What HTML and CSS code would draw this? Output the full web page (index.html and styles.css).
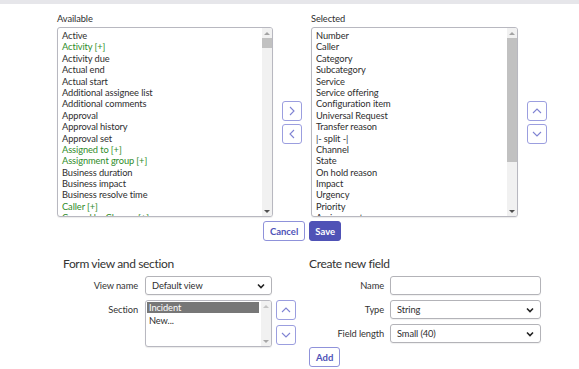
FILE: index.html
```html
<!DOCTYPE html>
<html lang="en">
<head>
    <meta charset="UTF-8">
    <meta name="viewport" content="width=device-width, initial-scale=1.0">
    <title>Configure form layout</title>
    <link rel="stylesheet" href="styles.css">
</head>
<body>

    <div class="topbar"></div>

    <!-- slushbucket -->
    <div class="bucket">
        <div class="bucket-col avail-col">
            <div class="col-label">Available</div>
            <div class="listbox big">
                <div class="items">
                    <div class="item">Active</div>
                    <div class="item ref">Activity [+]</div>
                    <div class="item">Activity due</div>
                    <div class="item">Actual end</div>
                    <div class="item">Actual start</div>
                    <div class="item">Additional assignee list</div>
                    <div class="item">Additional comments</div>
                    <div class="item">Approval</div>
                    <div class="item">Approval history</div>
                    <div class="item">Approval set</div>
                    <div class="item ref">Assigned to [+]</div>
                    <div class="item ref">Assignment group [+]</div>
                    <div class="item">Business duration</div>
                    <div class="item">Business impact</div>
                    <div class="item">Business resolve time</div>
                    <div class="item ref">Caller [+]</div>
                    <div class="item ref">Caused by Change [+]</div>
                </div>
                <div class="scrollbar">
                    <span class="arrow up"></span>
                    <div class="track"><div class="thumb thumb-small"></div></div>
                    <span class="arrow down"></span>
                </div>
            </div>
        </div>

        <div class="movers">
            <button class="icon-btn" title="Add">
                <svg width="8" height="10" viewBox="0 0 8 10"><path d="M2 1 L6 5 L2 9" /></svg>
            </button>
            <button class="icon-btn" title="Remove">
                <svg width="8" height="10" viewBox="0 0 8 10"><path d="M6 1 L2 5 L6 9" /></svg>
            </button>
        </div>

        <div class="bucket-col sel-col">
            <div class="col-label">Selected</div>
            <div class="listbox big">
                <div class="items">
                    <div class="item">Number</div>
                    <div class="item">Caller</div>
                    <div class="item">Category</div>
                    <div class="item">Subcategory</div>
                    <div class="item">Service</div>
                    <div class="item">Service offering</div>
                    <div class="item">Configuration item</div>
                    <div class="item">Universal Request</div>
                    <div class="item">Transfer reason</div>
                    <div class="item">|- split -|</div>
                    <div class="item">Channel</div>
                    <div class="item">State</div>
                    <div class="item">On hold reason</div>
                    <div class="item">Impact</div>
                    <div class="item">Urgency</div>
                    <div class="item">Priority</div>
                    <div class="item">Assignment group</div>
                </div>
                <div class="scrollbar">
                    <span class="arrow up"></span>
                    <div class="track"><div class="thumb thumb-big"></div></div>
                    <span class="arrow down"></span>
                </div>
            </div>
        </div>

        <div class="movers">
            <button class="icon-btn" title="Move up">
                <svg width="10" height="8" viewBox="0 0 10 8"><path d="M1 6 L5 2 L9 6" /></svg>
            </button>
            <button class="icon-btn" title="Move down">
                <svg width="10" height="8" viewBox="0 0 10 8"><path d="M1 2 L5 6 L9 2" /></svg>
            </button>
        </div>
    </div>

    <div class="actions">
        <button class="button">Cancel</button>
        <button class="button primary">Save</button>
    </div>

    <!-- form view / new field -->
    <div class="forms">
        <div class="form-block view-block">
            <h3>Form view and section</h3>
            <div class="form-grid">
                <label class="form-label">View name</label>
                <div class="select-box">
                    <span>Default view</span>
                    <svg class="chev" width="8" height="6" viewBox="0 0 8 6"><path d="M1 1.5 L4 4.5 L7 1.5" /></svg>
                </div>
                <div></div>

                <label class="form-label">Section</label>
                <div class="listbox small">
                    <div class="items">
                        <div class="item picked">Incident</div>
                        <div class="item">New...</div>
                    </div>
                    <div class="scrollbar">
                        <span class="arrow up faint"></span>
                        <div class="track"></div>
                        <span class="arrow down faint"></span>
                    </div>
                </div>
                <div class="movers section-movers">
                    <button class="icon-btn" title="Move up">
                        <svg width="10" height="8" viewBox="0 0 10 8"><path d="M1 6 L5 2 L9 6" /></svg>
                    </button>
                    <button class="icon-btn" title="Move down">
                        <svg width="10" height="8" viewBox="0 0 10 8"><path d="M1 2 L5 6 L9 2" /></svg>
                    </button>
                </div>
            </div>
        </div>

        <div class="form-block field-block">
            <h3>Create new field</h3>
            <div class="form-grid wide">
                <label class="form-label">Name</label>
                <div class="text-box"></div>

                <label class="form-label">Type</label>
                <div class="select-box">
                    <span>String</span>
                    <svg class="chev" width="8" height="6" viewBox="0 0 8 6"><path d="M1 1.5 L4 4.5 L7 1.5" /></svg>
                </div>

                <label class="form-label">Field length</label>
                <div class="select-box">
                    <span>Small (40)</span>
                    <svg class="chev" width="8" height="6" viewBox="0 0 8 6"><path d="M1 1.5 L4 4.5 L7 1.5" /></svg>
                </div>
            </div>
            <button class="button add-btn">Add</button>
        </div>
    </div>

</body>
</html>
```

FILE: styles.css
```css
body {
    margin: 0;
    font-family: Lato, "Open Sans", sans-serif;
    font-size: 9.3px;
    letter-spacing: -0.1px;
    color: #2e2e2e;
    background: #fff;
}
.topbar {
    height: 4px;
    background: #e6e6ea;
}

/* slushbucket */
.bucket {
    display: flex;
    align-items: flex-start;
    gap: 9px;
    margin: 9px 0 0 57px;
}
.avail-col {
    width: 216px;
}
.sel-col {
    width: 207px;
}
.col-label {
    line-height: 12px;
    height: 12px;
    margin-bottom: 2px;
}
.listbox {
    display: flex;
    border: 1px solid #b8b8c0;
    border-radius: 3px;
    box-shadow: 0 1px 1px rgba(0, 0, 0, 0.08);
    overflow: hidden;
    background: #fff;
}
.listbox.big {
    height: 188px;
}
.listbox .items {
    flex: 1;
    overflow: hidden;
    padding: 2px 0 0 4px;
}
.item {
    line-height: 11.4px;
    height: 11.4px;
    white-space: nowrap;
}
.item.ref {
    color: #2f8c2a;
}
.scrollbar {
    width: 10px;
    display: flex;
    flex-direction: column;
    background: #f1f1f1;
}
.track {
    flex: 1;
}
.thumb {
    background: #c1c1c1;
}
.thumb-small {
    height: 10px;
}
.thumb-big {
    height: 124px;
}
.arrow {
    height: 10px;
    display: flex;
    align-items: center;
    justify-content: center;
}
.arrow::before {
    content: "";
    border-left: 3px solid transparent;
    border-right: 3px solid transparent;
}
.arrow.up::before {
    border-bottom: 3px solid #a3a3a3;
}
.arrow.down::before {
    border-top: 3px solid #505050;
}
.arrow.faint.up::before {
    border-bottom-color: #c4c4c4;
}
.arrow.faint.down::before {
    border-top-color: #a8a8a8;
}

.movers {
    display: flex;
    flex-direction: column;
    gap: 3px;
    align-self: center;
    margin-top: 14px;
}
.icon-btn {
    width: 20px;
    height: 20px;
    padding: 0;
    border: 1px solid #9b9edf;
    border-radius: 3px;
    background: #fff;
    display: flex;
    align-items: center;
    justify-content: center;
    cursor: pointer;
}
.icon-btn svg path {
    fill: none;
    stroke: #7f83d3;
    stroke-width: 1.1;
}

.actions {
    display: flex;
    justify-content: center;
    gap: 4px;
    margin: 4px 0 0 57px;
    width: 490px;
}
.button {
    height: 20px;
    padding: 0 6px;
    border: 1px solid #8f92da;
    border-radius: 3px;
    background: #fff;
    color: #4f53b8;
    font-family: Lato, "Open Sans", sans-serif;
    font-size: 9.5px;
    font-weight: bold;
    cursor: pointer;
}
.button.primary {
    background: #4f52b6;
    border-color: #4f52b6;
    color: #fff;
    padding: 0 5px;
}

/* lower forms */
.forms {
    display: flex;
    margin: 15px 0 0 63px;
}
.form-block h3 {
    margin: 0 0 4px 0;
    font-size: 12px;
    letter-spacing: -0.35px;
    line-height: 16px;
    font-weight: normal;
    color: #333;
}
.view-block {
    width: 246px;
}
.form-grid {
    display: grid;
    grid-template-columns: 75px 127px 20px;
    column-gap: 7px;
    row-gap: 5px;
    align-items: start;
}
.form-grid.wide {
    grid-template-columns: 75px 151px;
    column-gap: 6px;
}
.form-label {
    text-align: right;
    line-height: 19px;
    color: #333;
}
.select-box, .text-box {
    height: 17px;
    border: 1px solid #b3b3b8;
    border-radius: 3px;
    display: flex;
    align-items: center;
    justify-content: space-between;
    padding: 0 6px;
    box-shadow: 0 1px 1px rgba(0, 0, 0, 0.06);
}
.chev path {
    fill: none;
    stroke: #222;
    stroke-width: 1.6;
}
.listbox.small {
    height: 45px;
}
.listbox.small .items {
    padding: 1px 2px 0 1px;
}
.listbox.small .item {
    padding-left: 2px;
    height: 11px;
    line-height: 11px;
}
.listbox.small .item + .item {
    margin-top: 1.5px;
}
.item.picked {
    background: #777;
    color: #fff;
}
.section-movers {
    align-self: start;
    margin-top: 0;
    gap: 5px;
    margin-left: -3px;
}
.add-btn {
    margin-top: 4px;
    padding: 0 6px;
}
```
